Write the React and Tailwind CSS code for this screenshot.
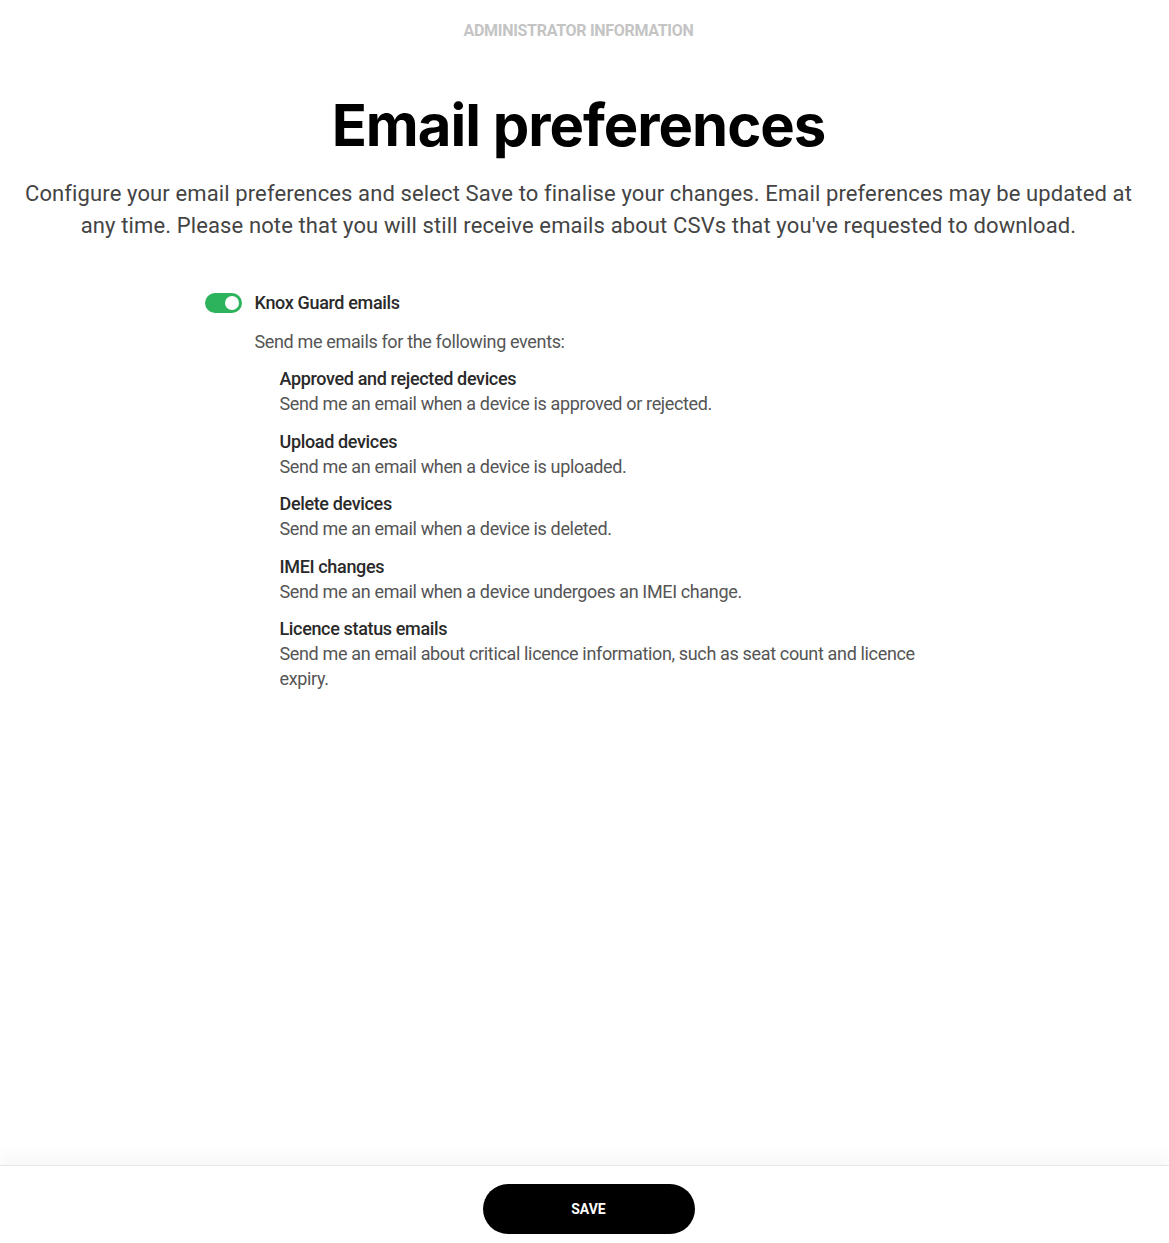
import React from "react";

const items = [
  ["Approved and rejected devices", "Send me an email when a device is approved or rejected."],
  ["Upload devices", "Send me an email when a device is uploaded."],
  ["Delete devices", "Send me an email when a device is deleted."],
  ["IMEI changes", "Send me an email when a device undergoes an IMEI change."],
  ["Licence status emails", "Send me an email about critical licence information, such as seat count and licence expiry."],
];

export default function App() {
  return (
    <div className="min-h-screen flex flex-col bg-white font-['Roboto',sans-serif]">
      <main className="flex-1 flex flex-col items-center pr-[12px]">
        <div className="pt-[21px] text-[16px] leading-[20px] font-bold text-[#c4c4c4] tracking-[-0.3px]">
          ADMINISTRATOR INFORMATION
        </div>
        <h1 className="mt-[52px] text-[58px] leading-[64px] font-bold text-black tracking-[-1px] font-['Inter',sans-serif]">
          Email preferences
        </h1>
        <p className="mt-[21px] px-[20px] text-center text-[22px] leading-[32px] text-[#444] tracking-[0.12px]">
          Configure your email preferences and select Save to finalise your changes. Email preferences may be updated at any time. Please note that you will still receive emails about CSVs that you've requested to download.
        </p>
        <div className="mt-[48px] w-[748px] tracking-[-0.35px]">
          <div className="flex items-center">
            <div className="w-[37px] h-[20px] rounded-full bg-[#2db35c] flex items-center justify-end pr-[3px]">
              <div className="w-[14px] h-[14px] rounded-full bg-white" />
            </div>
            <span className="ml-[13px] text-[18px] leading-[25px] font-medium text-[#2a2a2a]">Knox Guard emails</span>
          </div>
          <div className="ml-[50px] mt-[14px] text-[18px] leading-[25px] text-[#555]">
            Send me emails for the following events:
          </div>
          <div className="ml-[75px] mt-[12px] flex flex-col gap-[12.5px]">
            {items.map(([t, d]) => (
              <div key={t} className="text-[18px] leading-[25px]">
                <div className="font-medium text-[#2a2a2a]">{t}</div>
                <div className="text-[#555]">{d}</div>
              </div>
            ))}
          </div>
        </div>
      </main>
      <footer className="bg-white border-t border-[#e6e6e6] shadow-[0_-10px_16px_rgba(0,0,0,0.03)] flex justify-center pt-[18px] pb-[9px] pl-[8px]">
        <button className="w-[212px] h-[50px] rounded-full bg-black text-white text-[14px] font-bold">
          SAVE
        </button>
      </footer>
    </div>
  );
}
